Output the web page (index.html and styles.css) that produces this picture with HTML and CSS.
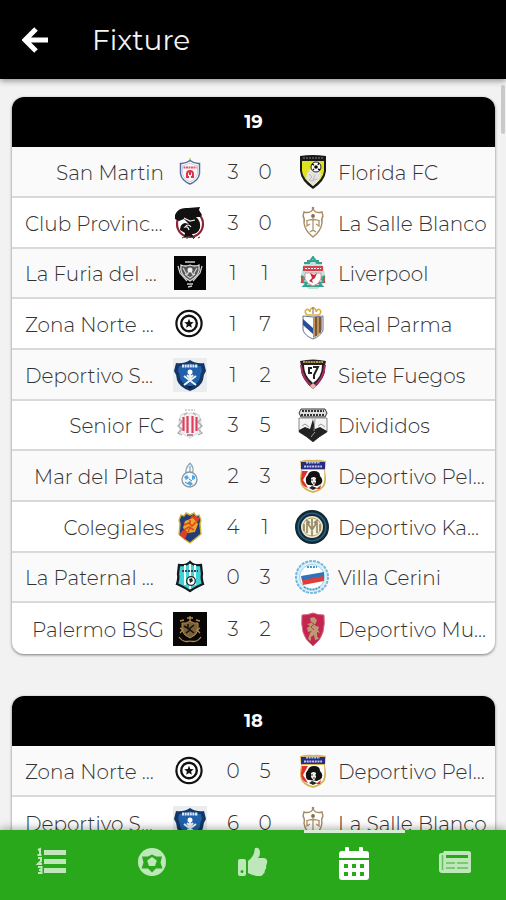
FILE: index.html
```html
<!DOCTYPE html>
<html lang="es">
<head>
    <meta charset="UTF-8">
    <meta name="viewport" content="width=device-width, initial-scale=1.0">
    <title>Fixture</title>
    <link rel="stylesheet" href="styles.css">
</head>
<body>
    <!-- escudos -->
    <svg class="sprites" aria-hidden="true">
        <symbol id="san-martin" viewBox="0 0 34 34">
            <path d="M17 3v4" stroke="#e5cf78" stroke-width="2"/>
            <path d="M7.500 8.500q5 .5 9.500-3 4.500 3.500 9.500 3v10q-1 7-9.500 10.500-8.500-3.500-9.500-10.500z" fill="#fff" stroke="#536d9c" stroke-width="1.500"/>
            <path d="M9.500 10.500q4 0 7.500-2.500 3.500 2.500 7.500 2.500v8q-1 5.500-7.500 8.500-6.500-3-7.500-8.500z" fill="#fff6f5" stroke="#c8cde0"/>
            <path d="M10.500 12.500h13" stroke="#e05a66" stroke-width="2.200" stroke-dasharray="2 .5"/>
            <path d="M14 23v-4q0-3 3-3t3 3v4M17 17v3M13.500 22h2.500M18 22h2.500" fill="none" stroke="#df3349" stroke-width="2"/>
        </symbol>
        <symbol id="provincial" viewBox="0 0 34 34">
            <circle cx="17" cy="18" r="13" fill="#fff" stroke="#8e2436" stroke-width="2.200"/>
            <path d="M2 9Q5 1 15 2l12-1-1 3 3 5-2 2-4 0q5 4 4 11-2 6-8 6l2 4-5-2-5 2 1-5-5-3q0-6 5-7l4 1-5-5-5 2-4-2z" fill="#111"/>
            <path d="M18 21q-3-4-6 0 3-1 4 3M11 12l6 3 5-1" fill="none" stroke="#eee" stroke-width="1.200"/>
            <path d="M9 32l2-1m3 2v-3m6 3l2-2m3 1l2-1" stroke="#333"/>
        </symbol>
        <symbol id="la-furia" viewBox="0 0 34 34">
            <path fill="#050505" d="M1 0h32v34H1z"/>
            <path d="M8 9q4 2 9 0 5 2 9 0 2 10-9 16Q6 19 8 9z" fill="#555" stroke="#ddd" stroke-width="1.300"/>
            <path d="M5 10l2 7 7 8M29 10l-2 7-7 8M12 6h10M10 12l4 7 3-6 3 6 4-7M12 18l5 4 5-4M14 28h6M15 31l4-1" fill="none" stroke="#ccc" stroke-width="1.300"/>
            <circle cx="17" cy="14" r="2.500" fill="#eee"/>
        </symbol>
        <symbol id="zona-norte" viewBox="0 0 34 34">
            <g fill="#fff" stroke="#111"><circle cx="16" cy="16.500" r="12.600" stroke-width="2.200"/><circle cx="16" cy="16.500" r="7.800" stroke-width="2.400"/></g>
            <path d="M16 11.800l1.300 3.200 3.400.2-2.600 2.200.8 3.400-2.900-1.800-2.900 1.800.8-3.400-2.600-2.200 3.400-.2z" fill="#111"/>
        </symbol>
        <symbol id="deportivo-s" viewBox="0 0 34 34">
            <path fill="#e9edf0" d="M0 0h34v34H0z"/>
            <path d="M3 5q8 1 14-3 6 4 14 3l2 8q-3 4-3 9-2 7-13 11Q6 29 4 22q0-5-3-9z" fill="#153564"/>
            <path d="M6 8q7 0 11-3 4 3 11 3l1 5q-2 3-2 7-1 5-10 9-9-4-10-9 0-4-2-7z" fill="#2160ab"/>
            <path d="M9 8h16" stroke="#d7e9fb" stroke-width="3" stroke-dasharray="2 .6"/>
            <circle cx="17" cy="14" r="2.500" fill="#fff"/>
            <path d="M17 16v7M11 18l12 9M23 18l-12 9M14 17l3 3 3-3" fill="none" stroke="#edf2f5" stroke-width="2"/>
            <path d="M14 28l3 3 3-3z" fill="#101c36"/>
        </symbol>
        <symbol id="senior" viewBox="0 0 34 34">
            <path d="M12 2h10" stroke="#aaa" stroke-width="1" stroke-dasharray="2 1"/>
            <path d="M8 7q3-3 9-2 6-1 9 2l2 6-1 11-5 3-5 3-5-3-5-3-1-11z" fill="#f1f1f1" stroke="#d6d6d6"/>
            <path d="M6 11l3 3-4 4 4 3-4 4 4 2M28 11l-3 3 4 4-4 3 4 4-4 2M11 7l3-2M20 5l3 2" fill="none" stroke="#aaa" stroke-width="1.300"/>
            <path d="M10.500 9v14M14.500 8v17M19.500 8v17M23.500 9v14" stroke="#e43d5b" stroke-width="2.200"/>
            <path d="M14 27h6" stroke="#999" stroke-width="2"/>
        </symbol>
        <symbol id="mar-del-plata" viewBox="0 0 34 34">
            <path d="M17 4q5 6 2 10M17 4q-5 6-4 10M17 7v6" fill="none" stroke="#8aa8b8" stroke-width="1.300"/>
            <circle cx="16.500" cy="20.500" r="7.500" fill="#f4f9fc" stroke="#8297a5" stroke-width="1.300"/>
            <path d="M11 18l3-2 2 3-3 2zM19 16l3 1 0 3-3 1zM14 24l3-2 3 3-3 2z" fill="#52a5dd"/>
            <path d="M16 20l3 2M12 23l3 2" stroke="#5c7e99"/>
        </symbol>
        <symbol id="colegiales" viewBox="0 0 34 34">
            <path d="M8 5l3 1 2-3 4 2 4-2 2 3 3-1 2 5-1 4 1 10-6 5-5 4-6-4-5-5 1-10-1-4z" fill="#223d78" stroke="#d0b23b" stroke-width="1.400"/>
            <path d="M19 5l8 3-3 5-8-2zM15 22l-3 7-6-4 4-5z" fill="#df3e27"/>
            <path d="M12 11l8-3 5 6-3 8-7 1-5-5z" fill="#efa529"/>
            <path d="M11 15l5-2 3 3 4-4M11 20l5-3 5 3M17 10v5M15 22l2-4" fill="none" stroke="#d64c25" stroke-width="1.600"/>
        </symbol>
        <symbol id="la-paternal" viewBox="0 0 34 34">
            <path d="M6 5q7 1 11-3 4 4 11 3l1 9q-1 4 1 10-5 2-13 7-8-5-13-7 2-6 1-10z" fill="#42d0d7" stroke="#151b1d" stroke-width="2.300"/>
            <path d="M12 5v20M22 5v20M17 4v25" stroke="#ebffff" stroke-width="2"/>
            <path d="M9 11h16" stroke="#345" stroke-width="1.800" stroke-dasharray="2 1"/>
            <circle cx="18" cy="21" r="4.300" fill="#fff" stroke="#222" stroke-width="1.300"/>
            <path d="M16 19l3-1 1 3-3 2z" fill="#222"/>
        </symbol>
        <symbol id="palermo" viewBox="0 0 34 34">
            <path fill="#080706" d="M0 0h34v34H0z"/>
            <path d="M9 11q4 1 8-2 4 3 8 2v7q-1 5-8 8-7-3-8-8z" fill="#7b6038" stroke="#b18a50"/>
            <path d="M17 4v5M14 6h6M7 9l4-1M27 9l-4-1M7 16l3 2-3 3M27 16l-3 2 3 3M6 25q4 6 11 4 7 2 11-4" fill="none" stroke="#b18a50" stroke-width="1.300"/>
            <path d="M11 14l5 3 5-4M13 21l4-3 4 3M15 12v4" fill="none" stroke="#14100b" stroke-width="1.500"/>
        </symbol>
        <symbol id="florida" viewBox="0 0 34 34">
            <path d="M5 1q12-2 26 0v15q-1 10-13 18Q6 26 5 16z" fill="#181916"/>
            <path d="M7 6h22v10q-1 8-11 15Q8 24 7 16z" fill="#dfe222"/>
            <path d="M17 12q-6 6-6 12l7 7q8-6 8-13l-4-2z" fill="#e3e3e0"/>
            <path d="M8 3h20" stroke="#888" stroke-dasharray="2 1"/>
            <path d="M14 19l3 3-3 3 5 1M20 20l-2 5 4-1" fill="none" stroke="#bbb"/>
            <circle cx="21" cy="12" r="5" fill="#fff" stroke="#222"/><circle cx="21" cy="12" r="1.800"/>
            <path d="M17 9l2 1M24 8l-1 2M18 15l1-1M25 15l-2-1" stroke="#111" stroke-width="1.500"/>
        </symbol>
        <symbol id="la-salle" viewBox="0 0 34 34">
            <path d="M18 3q3 5 9 3l1 4q-2 3-1 7-1 8-9 14-8-6-9-14 1-4-1-7l1-4q6 2 9-3z" fill="#fff" stroke="#a58b64" stroke-width="1.400"/>
            <circle cx="18" cy="2" r="1.300" fill="#a58b64"/><circle cx="18" cy="10" r="1.900" fill="#8b6b43"/>
            <path d="M18 11v14M11 15q7-3 14 0M12 15v5l3-2M21 18l3 2v-5M15 26q3-3 6 0" fill="none" stroke="#b1946b" stroke-width="1.300"/>
        </symbol>
        <symbol id="liverpool" viewBox="0 0 34 34">
            <path d="M8 10l4-5 6-4 6 4 4 5 2 9-3 7-4 7H13l-4-7-3-7z" fill="#bee2dc"/>
            <path d="M9 7h5l4-6 4 6h5M12 5h12M6 20l4 2-3 4 5 1-3 3h18l-3-3 5-1-3-4 4-2" fill="none" stroke="#36a18f" stroke-width="2"/>
            <path d="M8 10h20v5H8z" fill="#d44250"/><path d="M10 12.500h16" stroke="#fff" stroke-dasharray="2 1"/>
            <path d="M10 17h16v6q-2 5-8 7-6-2-8-7z" fill="#fff" stroke="#e28c92"/>
            <path d="M15 17l4 2 3-2-2 5-3 2 1 3-4-2 3-3z" fill="#ce2639"/>
            <path d="M7 21v6M29 21v6" stroke="#cc5143" stroke-width="2"/>
        </symbol>
        <symbol id="real-parma" viewBox="0 0 34 34">
            <path d="M12 8q-3-3-1-5 2-2 4 2 0-4 3-4t3 4q2-4 4-2 2 2-1 5z" fill="#fff" stroke="#d9af42" stroke-width="1.500"/>
            <path d="M18 0v7" stroke="#6c6684"/>
            <path d="M8 9q10 2 20 0v14q-2 6-10 9-8-3-10-9z" fill="#fff" stroke="#667091"/>
            <path d="M18 10h9v13q-2 5-9 8z" fill="#bd9357"/>
            <path d="M21 10v19M25 10v16" stroke="#654332" stroke-width="1.500"/>
            <path d="M8 12l10 9v6L8 18z" fill="#244d9b"/>
        </symbol>
        <symbol id="siete-fuegos" viewBox="0 0 34 34">
            <path d="M5 3q13-3 26 0-2 6-1 11-3 10-12 17Q9 24 6 14q1-5-1-11z" fill="#28201f"/>
            <path d="M6 7q1 14 12 22Q29 21 30 7" fill="none" stroke="#ac2a66" stroke-width="2"/>
            <path d="M9 7h18q0 12-9 18Q9 18 9 7z" fill="#fff"/>
            <path d="M8 4h20" stroke="#b09856" stroke-width="2" stroke-dasharray="2 .6"/>
            <path d="M13 10h4M18 9h5l-4 8v4M14 10v5h3" fill="none" stroke="#222" stroke-width="2"/>
            <path d="M18 25l3 3-3 3-3-3z" fill="#e6b6a5"/>
        </symbol>
        <symbol id="divididos" viewBox="0 0 34 34">
            <path d="M6 1h24l2 4-2 4H6L4 5z" fill="#ddd" stroke="#333"/>
            <path d="M7 3h22M6 7h24" stroke="#333" stroke-width="2" stroke-dasharray="2 1"/>
            <path d="M4 10h28v14q-8 4-14 10Q12 28 4 24z" fill="#f5f5f5" stroke="#888"/>
            <path d="M4 22l6-3 5 2 3-10 2 10 5-2 7 4v1q-8 5-14 10Q12 29 4 24z" fill="#222"/>
            <path d="M20 11l-1 12M16 29l4-5M7 18l3-2 4 3M23 18l3-2 4 3" fill="none" stroke="#999"/>
        </symbol>
        <symbol id="deportivo-pel" viewBox="0 0 34 34">
            <path d="M5 2q8-2 13-1 5-1 13 1l-1 10q2 8 0 14-2 5-12 8Q8 31 6 26q-2-6 0-14z" fill="#d7b557"/>
            <path d="M6 3h24v7H6z" fill="#282b83"/>
            <path d="M11 3.500h14M9 7.500h18" stroke="#bdc6e9" stroke-width="2" stroke-dasharray="2 .7"/>
            <path d="M7 11h22q1 10-1 15-3 4-10 6-7-2-10-6-2-5-1-15z" fill="#fff"/>
            <path d="M7 12h6l-5 9 5 8q-7-2-7-9z" fill="#df302c"/>
            <path d="M11 22q-1-3 2-6 1-4 6-4 6 0 6 5 4 4 1 8l-4 2-8-1q-3 0-3-4z" fill="#111"/>
            <path d="M16 19q3-2 5 0v4l-2 4-3-4z" fill="#f2ebe7"/><path d="M16 21h2M20 21h1M18 24h2" stroke="#333"/>
            <path d="M14 29l3-2 5 2-4 2z" fill="#222"/><path d="M26 26l-5 4h4z" fill="#d33027"/>
        </symbol>
        <symbol id="deportivo-ka" viewBox="0 0 34 34">
            <circle cx="17" cy="17" r="15.800" fill="#1e648b" stroke="#162730" stroke-width="2.400"/>
            <circle cx="17" cy="17" r="12" fill="#eee8cf" stroke="#182a35" stroke-width="2"/>
            <circle cx="17" cy="17" r="9" fill="#f6f2df" stroke="#b6a77d"/>
            <path d="M12 23V12l5 8 5-8v11M17 9v17M9 14v7M25 14v7M11 10l4 3M23 10l-4 3" fill="none" stroke="#988a64" stroke-width="1.700"/>
        </symbol>
        <symbol id="villa-cerini" viewBox="0 0 34 34">
            <circle cx="17" cy="17" r="16" fill="#ddf1fb" stroke="#77b9dd" stroke-width="2" stroke-dasharray="3 1"/>
            <circle cx="17" cy="17" r="12.500" fill="#fff" stroke="#a2cee6"/>
            <path d="M12 7h10M9 27q8 5 16 0" fill="none" stroke="#4c9bce" stroke-width="2" stroke-dasharray="2 1"/>
            <path d="M6 16l23-4v5L7 21z" fill="#2e73b8"/><path d="M7 20l22-4v5L8 25z" fill="#df3d3b"/>
        </symbol>
        <symbol id="deportivo-mu" viewBox="0 0 34 34">
            <path d="M7 3q6 0 11-2 5 2 11 2 1 9-1 17-2 8-10 14Q10 28 8 20 6 12 7 3z" fill="#c32450" stroke="#d36a7f"/>
            <path d="M15 6l4-1 3 3-1 3-2 2 5 2-1 3 2 3-3-1 0 4 2 3-4 1-1-5-3 2 0 4-3-2 2-6 2-2-4 1-1-4 3-2-3-2 4-1z" fill="#bd9873"/>
            <path d="M16 10l3 2-3 3 3 3" fill="none" stroke="#94505a"/>
        </symbol>
    </svg>

    <header class="topbar">
        <button class="back" aria-label="Volver">
            <svg viewBox="0 0 26 26"><path d="M14 2L3 13l11 11M3 13h23" fill="none" stroke="#fff" stroke-width="5"/></svg>
        </button>
        <h1>Fixture</h1>
    </header>

    <div class="content">
        <main class="list">
            <section class="round">
                <h2>19</h2>
                <ul>
                    <li class="match"><span class="home">San Martin</span><svg class="crest"><use href="#san-martin"/></svg><span class="score"><b>3</b><b>0</b></span><svg class="crest"><use href="#florida"/></svg><span class="away">Florida FC</span></li>
                    <li class="match"><span class="home long">Club Provinc...</span><svg class="crest"><use href="#provincial"/></svg><span class="score"><b>3</b><b>0</b></span><svg class="crest"><use href="#la-salle"/></svg><span class="away">La Salle Blanco</span></li>
                    <li class="match"><span class="home long">La Furia del ...</span><svg class="crest"><use href="#la-furia"/></svg><span class="score"><b>1</b><b>1</b></span><svg class="crest"><use href="#liverpool"/></svg><span class="away">Liverpool</span></li>
                    <li class="match"><span class="home long">Zona Norte ...</span><svg class="crest"><use href="#zona-norte"/></svg><span class="score"><b>1</b><b>7</b></span><svg class="crest"><use href="#real-parma"/></svg><span class="away">Real Parma</span></li>
                    <li class="match"><span class="home long">Deportivo S...</span><svg class="crest"><use href="#deportivo-s"/></svg><span class="score"><b>1</b><b>2</b></span><svg class="crest"><use href="#siete-fuegos"/></svg><span class="away">Siete Fuegos</span></li>
                    <li class="match"><span class="home">Senior FC</span><svg class="crest"><use href="#senior"/></svg><span class="score"><b>3</b><b>5</b></span><svg class="crest"><use href="#divididos"/></svg><span class="away">Divididos</span></li>
                    <li class="match"><span class="home">Mar del Plata</span><svg class="crest"><use href="#mar-del-plata"/></svg><span class="score"><b>2</b><b>3</b></span><svg class="crest"><use href="#deportivo-pel"/></svg><span class="away">Deportivo Pel...</span></li>
                    <li class="match"><span class="home">Colegiales</span><svg class="crest"><use href="#colegiales"/></svg><span class="score"><b>4</b><b>1</b></span><svg class="crest"><use href="#deportivo-ka"/></svg><span class="away">Deportivo Ka...</span></li>
                    <li class="match"><span class="home long">La Paternal ...</span><svg class="crest"><use href="#la-paternal"/></svg><span class="score"><b>0</b><b>3</b></span><svg class="crest"><use href="#villa-cerini"/></svg><span class="away">Villa Cerini</span></li>
                    <li class="match"><span class="home">Palermo BSG</span><svg class="crest"><use href="#palermo"/></svg><span class="score"><b>3</b><b>2</b></span><svg class="crest"><use href="#deportivo-mu"/></svg><span class="away">Deportivo Mu...</span></li>
                </ul>
            </section>

            <section class="round">
                <h2>18</h2>
                <ul>
                    <li class="match"><span class="home long">Zona Norte ...</span><svg class="crest"><use href="#zona-norte"/></svg><span class="score"><b>0</b><b>5</b></span><svg class="crest"><use href="#deportivo-pel"/></svg><span class="away">Deportivo Pel...</span></li>
                    <li class="match"><span class="home long">Deportivo S...</span><svg class="crest"><use href="#deportivo-s"/></svg><span class="score"><b>6</b><b>0</b></span><svg class="crest"><use href="#la-salle"/></svg><span class="away">La Salle Blanco</span></li>
                </ul>
            </section>
        </main>
        <div class="thumb"></div>
    </div>

    <nav class="tabs">
        <button class="tab" aria-label="Posiciones">
            <svg viewBox="0 0 34 34"><path d="M10 5h22v5H10zM10 14h22v5H10zM10 23h22v5H10z"/><path d="M4 5l2-1v6M3.500 10h4M4 13h3v3l-3 3h4M4 22h3.500v6H4M5 25h2" fill="none" stroke="currentColor" stroke-width="2"/></svg>
        </button>
        <button class="tab" aria-label="Goleadores">
            <svg viewBox="0 0 34 34"><circle cx="17" cy="17" r="14"/><path class="cut" d="M17 9.500l4 2 6 0-1.500 6 2 6-6.500 0-4 4-4-4-6.500 0 2-6L7 11.500l6 0z"/><path d="M17 12l4.800 3.400-1.800 5.600h-6l-1.800-5.600z"/></svg>
        </button>
        <button class="tab" aria-label="Fair play">
            <svg viewBox="0 0 34 34"><path fill-rule="evenodd" d="M4 14h4q2 0 2 2v13q0 2-2 2H4q-2 0-2-2V16q0-2 2-2zm2 11a1.500 1.500 0 100 3 1.500 1.500 0 000-3z"/><path d="M12 16q5-4 6-8l1-5q5-1 5 5 0 3-2 5h6q4 1 3 5l-1 3q1 2-1 4 0 3-2 4 0 2-4 2-6 0-11-3z"/></svg>
        </button>
        <button class="tab active" aria-label="Fixture">
            <svg viewBox="0 0 34 34"><path fill-rule="evenodd" d="M5 4h3V1q0-1 1-1h2q1 0 1 1v3h10V1q0-1 1-1h2q1 0 1 1v3h3q3 0 3 3v4H2V7q0-3 3-3zM2 13h30v17q0 3-3 3H5q-3 0-3-3zm5 4v4h4v-4zm8 0v4h4v-4zm8 0v4h4v-4zM7 25v4h4v-4zm8 0v4h4v-4zm8 0v4h4v-4z"/></svg>
        </button>
        <button class="tab" aria-label="Noticias">
            <svg viewBox="0 0 34 34"><path d="M6 6h24q3 0 3 2v18q0 2-3 2H4q-3 0-3-3V10q0-2 3-2h1z"/><path class="seam" d="M4.500 10v15M8 18h9M19 18h11M8 23h9M19 23h11"/><path class="cut" d="M8 10h22v3H8z"/></svg>
        </button>
    </nav>
</body>
</html>
```

FILE: styles.css
```css
* {
    box-sizing: border-box;
}
body {
    margin: 0;
    height: 100vh;
    display: flex;
    flex-direction: column;
    background-color: #f2f2f2;
    color: #333;
    font-family: Montserrat, Inter, sans-serif;
    font-size: 20px;
    font-weight: 300;
}
button {
    border: 0;
    padding: 0;
    background: none;
    cursor: pointer;
}
.sprites {
    position: absolute;
    width: 0;
    height: 0;
}

/* barra superior */
.topbar {
    flex: none;
    height: 79px;
    display: flex;
    align-items: center;
    gap: 44px;
    padding: 0 22px;
    background-color: #000;
    box-shadow: 0 2px 6px rgba(0, 0, 0, .4);
    z-index: 1;
}
.back,
.back svg {
    display: block;
    width: 26px;
    height: 26px;
}
.topbar h1 {
    margin: 0;
    color: #f4f4f4;
    font-size: 28px;
    font-weight: 400;
}

/* lista de fechas */
.content {
    flex: 1;
    min-height: 0;
    position: relative;
}
.list {
    height: 100%;
    overflow-y: auto;
    scrollbar-width: none;
    padding: 18px 11px 0 12px;
}
.thumb {
    position: absolute;
    top: 6px;
    right: 1px;
    width: 4px;
    height: 49px;
    border-radius: 2px;
    background-color: #c9c9c9;
}
.round {
    margin-bottom: 42px;
    border-radius: 12px;
    overflow: hidden;
    background-color: #fff;
    box-shadow: 0 1px 3px rgba(0, 0, 0, .5);
}
.round h2 {
    margin: 0;
    background-color: #000;
    color: #fff;
    font-size: 18px;
    font-weight: 700;
    line-height: 50px;
    text-align: center;
}
.round ul {
    margin: 0;
    padding: 0;
    list-style: none;
}
.match {
    height: 51px;
    display: grid;
    grid-template-columns: minmax(0, 14fr) 34px 70px 34px minmax(0, 15fr);
    column-gap: 9px;
    align-items: center;
    padding: 0 8px 0 13px;
    border-bottom: 2px solid #d9d9d9;
}
.match:nth-child(3n) {
    height: 50px;
}
.match:nth-child(odd) {
    background-color: #fafafa;
}
.match:last-child {
    border-bottom: 0;
}
.home,
.away {
    white-space: nowrap;
    padding-top: 2px;
}
.home {
    text-align: right;
}
/* los nombres cortados arrancan desde la izquierda */
.home.long {
    text-align: left;
}
.crest {
    width: 34px;
    height: 34px;
}
.score {
    display: flex;
    padding-left: 1px;
}
.score b {
    width: 32px;
    font-weight: 300;
    text-align: center;
}

/* menu inferior */
.tabs {
    flex: none;
    height: 70px;
    display: flex;
    background-color: #2aa81c;
    box-shadow: 0 -2px 8px rgba(0, 0, 0, .3);
    z-index: 1;
}
.tab {
    flex: 1;
    display: flex;
    align-items: center;
    justify-content: center;
    padding-bottom: 10px;
    border-top: 3px solid transparent;
    color: #bfe8ba;
}
.tab.active {
    padding-bottom: 6px;
    color: #fff;
    border-top-color: #d4f0d1;
}
.tab svg {
    width: 34px;
    height: 34px;
    fill: currentColor;
}
.tab .cut {
    fill: #2aa81c;
}
.tab .seam {
    fill: none;
    stroke: #2aa81c;
    stroke-width: 1.5px;
    opacity: .6;
}
```
